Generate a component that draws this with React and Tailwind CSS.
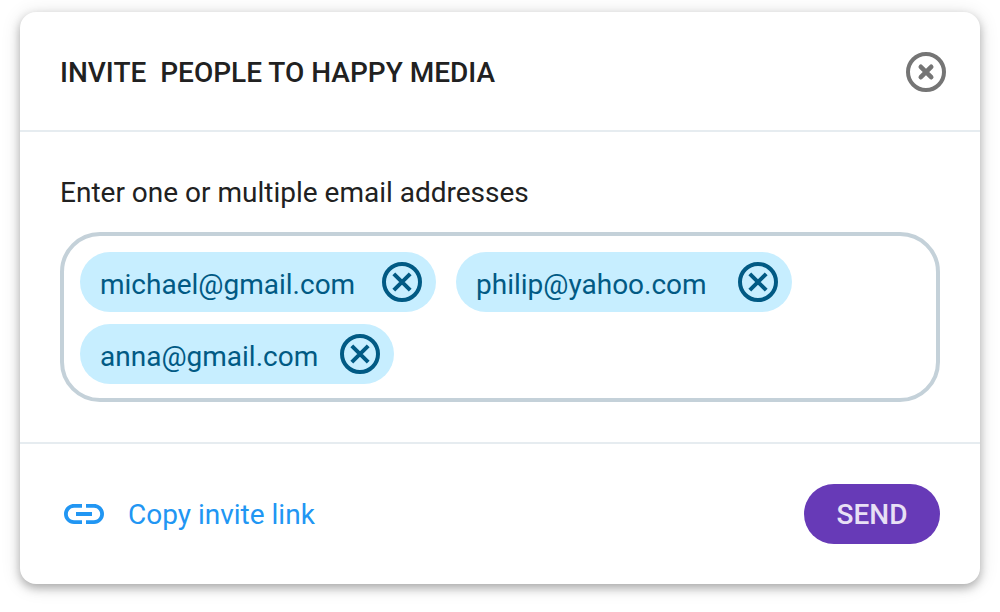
import React, { useState } from "react";

function CloseIcon() {
  return (
    <svg viewBox="0 0 40 40" fill="none" stroke="currentColor" strokeWidth="4" className="size-10" aria-hidden="true">
      <circle cx="20" cy="20" r="18" />
      <path strokeWidth="4.6" strokeLinecap="round" d="M14.8 14.8l10.4 10.4M25.2 14.8L14.8 25.2" />
    </svg>
  );
}

function RemoveIcon() {
  return (
    <svg viewBox="0 0 40 40" fill="none" stroke="currentColor" strokeWidth="4" className="size-10" aria-hidden="true">
      <circle cx="20" cy="20" r="18" />
      <path d="M11.8 11.8l16.4 16.4M28.2 11.8L11.8 28.2" />
    </svg>
  );
}

function Chip({ email, width, onRemove }) {
  return (
    <li className={`flex h-15 items-center justify-between rounded-full bg-[#c7eeff] pr-3.5 pl-5 text-[#015a84] ${width}`}>
      <span className="pt-1.5 text-[28px] leading-8">{email}</span>
      <button type="button" aria-label={`Remove ${email}`} onClick={onRemove} className="cursor-pointer">
        <RemoveIcon />
      </button>
    </li>
  );
}

const invited = [
  { email: "michael@gmail.com", width: "w-89" },
  { email: "philip@yahoo.com", width: "w-84" },
  { email: "anna@gmail.com", width: "w-[314px]" },
];

export default function App() {
  const [people, setPeople] = useState(invited);
  return (
    <main className="min-h-screen bg-white px-5 pt-3 pb-7 font-['Roboto',sans-serif]">
      <section aria-labelledby="title" className="rounded-2xl bg-white shadow-[0_4px_10px_rgba(0,0,0,0.28),0_2px_20px_rgba(0,0,0,0.12)]">
        <header className="flex h-30 items-center justify-between border-b-2 border-[#e6ecf0] pt-0.5 pr-8.5 pl-10">
          <h1 id="title" className="pt-0.5 text-[28px] leading-8 font-medium whitespace-pre text-[#212121]">{"INVITE  PEOPLE TO HAPPY MEDIA"}</h1>
          <button type="button" aria-label="Close" className="cursor-pointer text-[#757575]">
            <CloseIcon />
          </button>
        </header>
        <div className="border-b-2 border-[#e6ecf0] px-10 pt-11 pb-10">
          <label htmlFor="emails" className="block text-[28px] leading-[34px] text-[#212121]">Enter one or multiple email addresses</label>
          <ul className="mt-[22px] flex flex-wrap gap-x-5 gap-y-3 rounded-[40px] border-4 border-[#c4d1d9] p-4 pb-3.5">
            {people.map(({ email, width }) => (
              <Chip key={email} email={email} width={width} onRemove={() => setPeople(people.filter((p) => p.email !== email))} />
            ))}
            <li className="flex h-15 min-w-40 flex-1">
              <input id="emails" type="email" className="w-full bg-transparent pt-1 text-[28px] text-[#015a84] outline-none" />
            </li>
          </ul>
        </div>
        <footer className="flex items-center justify-between p-10">
          <a href="#invite" className="flex items-center gap-6 pl-1 text-[28px] leading-8 text-[#2196f3]">
            <svg viewBox="2 7 20 10" fill="currentColor" className="h-5 w-10" aria-hidden="true">
              <path d="M3.9 12c0-1.71 1.39-3.1 3.1-3.1h4V7H7c-2.76 0-5 2.24-5 5s2.24 5 5 5h4v-1.9H7c-1.71 0-3.1-1.39-3.1-3.1zM8 13h8v-2H8v2zm9-6h-4v1.9h4c1.71 0 3.1 1.39 3.1 3.1s-1.39 3.1-3.1 3.1h-4V17h4c2.76 0 5-2.24 5-5s-2.24-5-5-5z" />
            </svg>
            <span className="pt-0.5">Copy invite link</span>
          </a>
          <button type="button" className="h-15 min-w-34 cursor-pointer rounded-full bg-[#673ab7] px-8 pt-0.5 text-[28px] leading-8 font-medium text-[#e8e0f5]">SEND</button>
        </footer>
      </section>
    </main>
  );
}
